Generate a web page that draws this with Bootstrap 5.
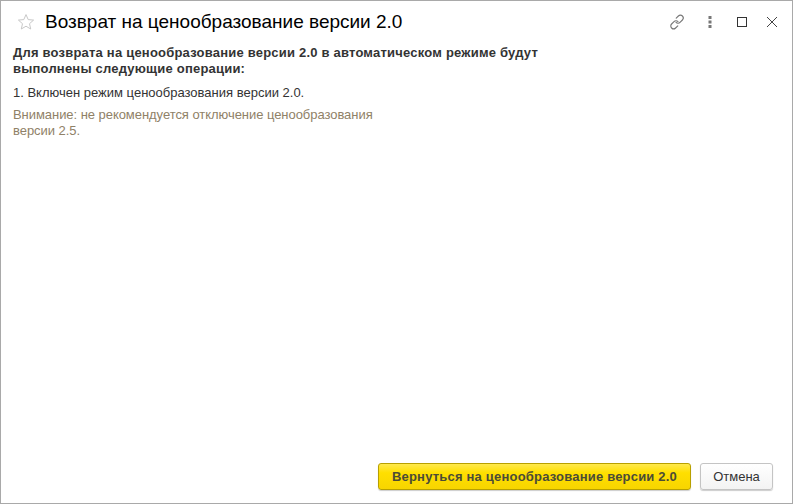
<!DOCTYPE html>
<html lang="ru">
<head>
<meta charset="utf-8">
<title>Возврат на ценообразование версии 2.0</title>
<link href="https://cdn.jsdelivr.net/npm/bootstrap@5.3.0/dist/css/bootstrap.min.css" rel="stylesheet">
<style>
html,body{margin:0;height:504px;background:#fff;overflow:hidden}
body{font-family:"Liberation Sans",Arial,sans-serif;font-size:13px;color:#333}
.win-frame{width:793px;height:504px;border:1px solid #a9a9a9;background:#fff}
.win-head{height:41px;padding:0 14px 0 16px}
.win-title{font-size:19px;line-height:24px;color:#000;margin:0 0 0 10px;font-weight:400}
.tool-ico{display:block}
.win-body{padding:0 12px;line-height:16px}
.lead-text{font-weight:700;color:#333;width:540px;margin:3px 0 0;line-height:16px;letter-spacing:.21px}
.step-text{color:#333;margin:8px 0 0;line-height:16px}
.warn-text{color:#8f8167;width:380px;margin:6px 0 0;line-height:16px;letter-spacing:-.05px}
.win-foot{padding:0 19px 13px 0;gap:9px}
.act-main,.act-sub{height:27px;font-size:13px;padding:0;border-radius:3px;line-height:1;font-family:inherit}
.act-main{width:313px;font-weight:700;color:#4b4b37;border:1px solid #b8a000;background:linear-gradient(#ffe94d 0,#ffdf00 35%,#f7d500 100%);box-shadow:0 1px 1px rgba(0,0,0,.2);letter-spacing:.2px}
.act-sub{width:73px;color:#333;border:1px solid #c4c4c4;background:linear-gradient(#fff,#f3f3f3);box-shadow:0 1px 1px rgba(0,0,0,.2)}
.act-main:hover{color:#4b4b37;border-color:#b8a000}
.act-sub:hover{color:#333;border-color:#c4c4c4}
</style>
</head>
<body>
<div class="win-frame d-flex flex-column">
  <div class="win-head d-flex align-items-center">
    <svg class="tool-ico" width="18" height="18" viewBox="0 0 18 18"><path d="M9 1.6l2.2 5 5.4.5-4.1 3.6 1.2 5.3L9 13.2l-4.7 2.8 1.2-5.3L1.4 7.1l5.4-.5z" fill="none" stroke="#c8c8c8" stroke-width="1"/></svg>
    <h1 class="win-title">Возврат на ценообразование версии 2.0</h1>
    <div class="d-flex align-items-center ms-auto">
      <svg class="tool-ico" width="18" height="18" viewBox="0 0 18 18" fill="none" stroke="#777" stroke-width="1.1" stroke-linecap="round"><path d="M8.2 5.2l2.2-2.2a2.8 2.8 0 0 1 4 4l-2.4 2.4a2.8 2.8 0 0 1-4 0"/><path d="M9.8 12.8l-2.2 2.2a2.8 2.8 0 0 1-4-4l2.4-2.4a2.8 2.8 0 0 1 4 0"/></svg>
      <svg class="tool-ico" style="margin-left:22px" width="4" height="12" viewBox="0 0 4 12" fill="#777"><rect x=".5" y="0" width="3" height="3"/><rect x=".5" y="4.5" width="3" height="3"/><rect x=".5" y="9" width="3" height="3"/></svg>
      <svg class="tool-ico" style="margin-left:25px" width="10" height="10" viewBox="0 0 10 10" fill="none" stroke="#333"><rect x=".5" y=".5" width="9" height="9"/></svg>
      <svg class="tool-ico" style="margin-left:19px" width="12" height="12" viewBox="0 0 12 12" fill="none" stroke="#444"><path d="M1 1l10 10M11 1L1 11"/></svg>
    </div>
  </div>
  <div class="win-body flex-grow-1">
    <p class="lead-text">Для возврата на ценообразование версии 2.0 в автоматическом режиме будут выполнены следующие операции:</p>
    <p class="step-text">1. Включен режим ценообразования версии 2.0.</p>
    <p class="warn-text">Внимание: не рекомендуется отключение ценообразования версии 2.5.</p>
  </div>
  <div class="win-foot d-flex justify-content-end">
    <button type="button" class="btn act-main">Вернуться на ценообразование версии 2.0</button>
    <button type="button" class="btn act-sub">Отмена</button>
  </div>
</div>
<script src="https://cdn.jsdelivr.net/npm/bootstrap@5.3.0/dist/js/bootstrap.bundle.min.js"></script>
</body>
</html>
